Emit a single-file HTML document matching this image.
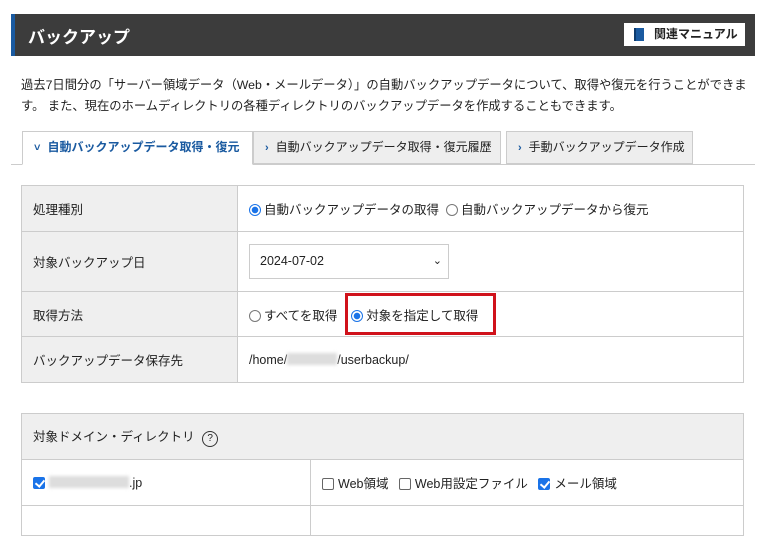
<!DOCTYPE html>
<html><head><meta charset="utf-8"><style>
*{box-sizing:border-box;margin:0;padding:0}
body{width:764px;height:516px;overflow:hidden;background:#fff;font-family:"Liberation Sans","Noto Sans CJK JP",sans-serif;color:#222;font-size:13px;position:relative}
.abs{position:absolute}
.hdr{left:11px;top:14px;width:744px;height:42px;background:#3c3c3c;border-left:4px solid #1a5aa0}
.hdr .t{position:absolute;left:13px;top:9px;color:#fff;font-size:17px;font-weight:bold}
.man{left:624px;top:23px;width:121px;height:23px;background:#fff;font-size:12px;font-weight:bold;line-height:23px;padding-left:30px}
.man i{position:absolute;left:10px;top:5px;width:10px;height:13px;background:#1a5aa0;border-left:2px solid #0d3b6e}
.desc{left:21px;top:75px;line-height:21px;font-size:12.3px;width:730px}
.tab{top:131px;height:33px;border:1px solid #ccc;background:#eee;font-size:12px;line-height:31px;padding-left:11px;white-space:nowrap;overflow:hidden}
.tab b{font-weight:bold;color:#1a5aa0;margin-right:7px;font-size:11px}
.line{left:11px;top:164px;width:744px;height:1px;background:#ccc}
table{position:absolute;border-collapse:collapse;left:21px;width:723px}
td{border:1px solid #ccc;font-size:12.5px;padding-left:11px;white-space:nowrap}
td.l{background:#efefef;width:216px}
.rad{display:inline-block;width:12px;height:12px;border:1px solid #777;border-radius:50%;vertical-align:-2px;margin-right:3px;background:#fff}
.rad.on{border:1px solid #1a73e8;background:radial-gradient(circle,#1a73e8 3px,#fff 3.5px)}
.cb{display:inline-block;width:12px;height:12px;border:1px solid #666;border-radius:2px;vertical-align:-2px;margin-right:4px;background:#fff;position:relative}
.cb.on{background:#1a73e8;border-color:#1a73e8}
.cb.on:after{content:"";position:absolute;left:3px;top:0px;width:4px;height:7px;border:solid #fff;border-width:0 2px 2px 0;transform:rotate(40deg)}
.blur{display:inline-block;background:#ddd;filter:blur(1.5px);height:12px;vertical-align:-1px}
</style></head><body>
<div class="abs hdr"><div class="t">バックアップ</div></div>
<div class="abs man"><i></i>関連マニュアル</div>
<div class="abs desc">過去7日間分の「サーバー領域データ（Web・メールデータ）」の自動バックアップデータについて、取得や復元を行うことができます。 また、現在のホームディレクトリの各種ディレクトリのバックアップデータを作成することもできます。</div>
<div class="abs line"></div>
<div class="abs tab" style="left:22px;width:231px;background:#fff;border-bottom:1px solid #fff;color:#1a5aa0;font-weight:bold;height:34px"><b>&#x2c5;</b>自動バックアップデータ取得・復元</div>
<div class="abs tab" style="left:253px;width:248px"><b>›</b>自動バックアップデータ取得・復元履歴</div>
<div class="abs tab" style="left:506px;width:187px"><b>›</b>手動バックアップデータ作成</div>
<table style="top:185px">
<tr style="height:46px"><td class="l">処理種別</td><td><span class="rad on"></span>自動バックアップデータの取得 &nbsp;<span class="rad"></span>自動バックアップデータから復元</td></tr>
<tr style="height:60px"><td class="l">対象バックアップ日</td><td><div style="width:200px;height:35px;border:1px solid #ccc;position:relative;line-height:33px;padding-left:10px">2024-07-02<span style="position:absolute;right:6px;top:0;font-size:11px">&#x2304;</span></div></td></tr>
<tr style="height:45px"><td class="l">取得方法</td><td><span class="rad"></span>すべてを取得 &nbsp;&nbsp;&nbsp;<span class="rad on"></span>対象を指定して取得</td></tr>
<tr style="height:46px"><td class="l">バックアップデータ保存先</td><td>/home/<span class="blur" style="width:50px"></span>/userbackup/</td></tr>
</table>
<div class="abs" style="left:345px;top:293px;width:151px;height:42px;border:3px solid #d0121b"></div>
<table style="top:413px">
<tr style="height:46px;background:#efefef"><td colspan="2">対象ドメイン・ディレクトリ <span style="display:inline-block;width:16px;height:16px;border:1px solid #333;border-radius:50%;text-align:center;font-size:10px;line-height:14px;margin-left:4px">?</span></td></tr>
<tr style="height:46px"><td style="width:289px"><span class="cb on"></span><span class="blur" style="width:80px"></span>.jp</td><td><span class="cb"></span>Web領域 &nbsp;&nbsp;<span class="cb"></span>Web用設定ファイル &nbsp;&nbsp;<span class="cb on"></span>メール領域</td></tr>
<tr style="height:30px"><td></td><td></td></tr>
</table>
</body></html>
